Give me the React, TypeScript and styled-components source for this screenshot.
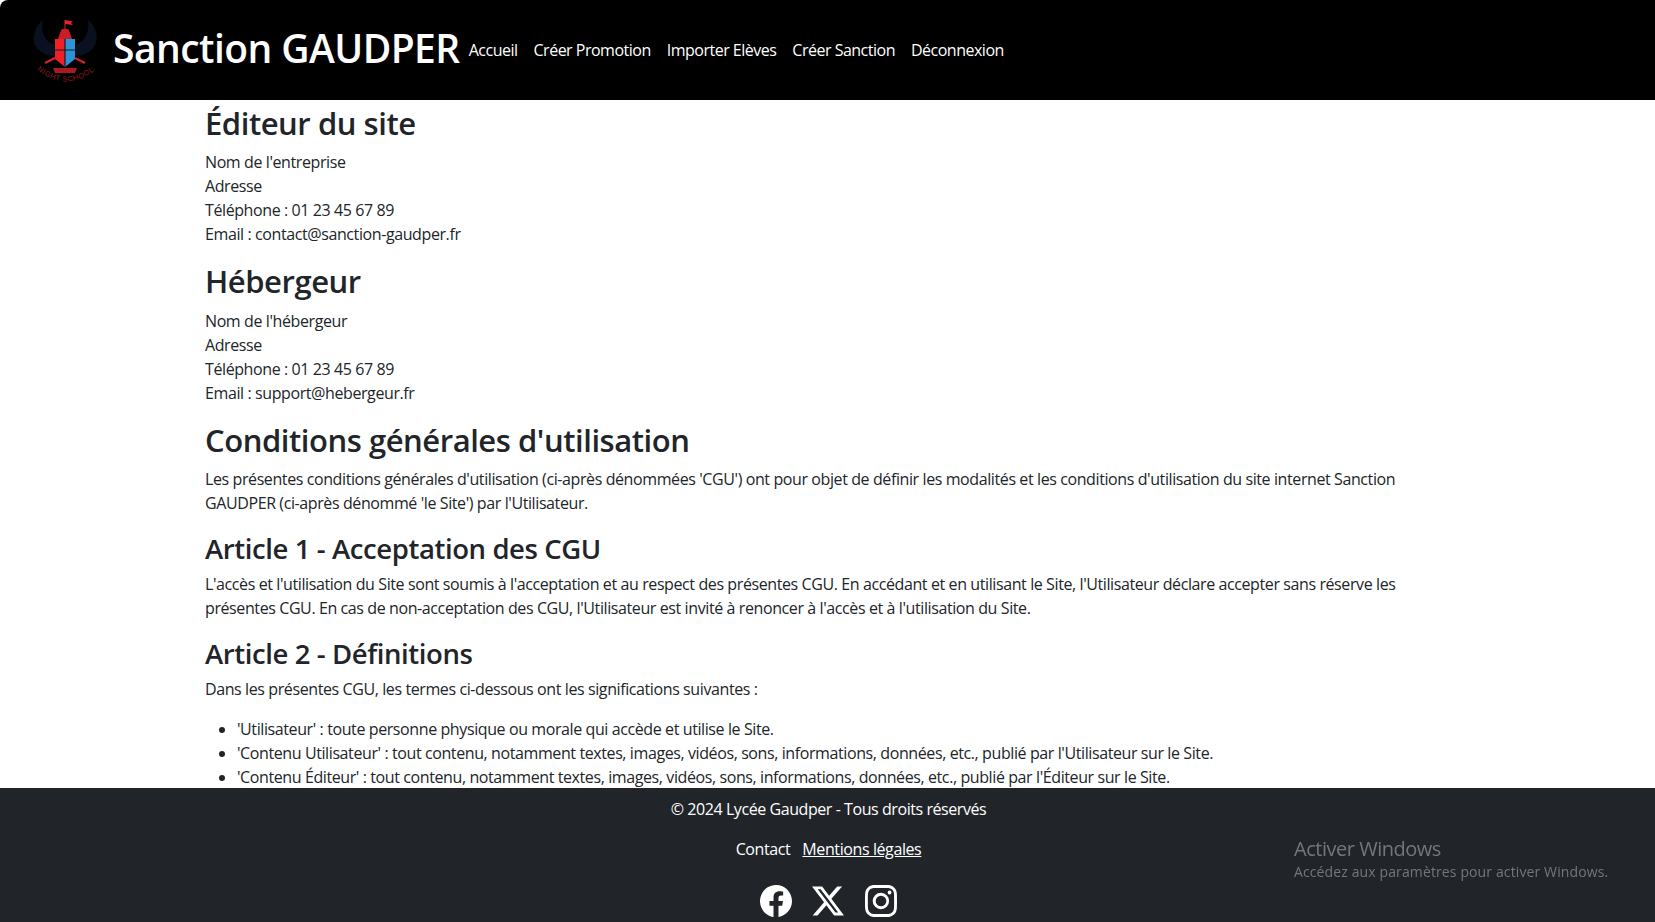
import { createGlobalStyle, styled } from "styled-components";
import { BsFacebook, BsInstagram, BsTwitterX } from "react-icons/bs";

const GlobalStyle = createGlobalStyle`
  * {
    box-sizing: border-box;
  }
  html, body {
    margin: 0;
    height: 100%;
    background: #fff;
  }
  body {
    font-family: "Open Sans", "Noto Sans", "Liberation Sans", sans-serif;
    font-size: 16px;
    line-height: 24px;
    letter-spacing: -0.4px;
    color: #212529;
  }
`;

const Page = styled.div`
  display: flex;
  flex-direction: column;
  height: 922px;
  overflow: hidden;
`;

const Header = styled.header`
  flex: 0 0 100px;
  display: flex;
  align-items: center;
  padding-left: 30px;
  background: #000;
  color: #fff;
  border-top-left-radius: 8px;
`;

const Brand = styled.a`
  display: flex;
  align-items: center;
  gap: 13px;
  margin-right: 9px;
  white-space: nowrap;
`;

const BrandName = styled.span`
  padding-bottom: 4px;
  font-size: 39px;
  font-weight: 600;
  line-height: 48px;
  letter-spacing: -0.55px;
`;

const Nav = styled.nav`
  display: flex;
  gap: 16px;
`;

const NavLink = styled.a`
  color: #fff;
  letter-spacing: -0.5px;
  white-space: nowrap;
`;

const Main = styled.main`
  flex: 1;
  min-height: 0;
  overflow: hidden;
  padding: 4px 205px 0;
`;

const Heading = styled.h2`
  margin: 0 0 8px;
  font-size: 31px;
  font-weight: 600;
  line-height: 38.4px;
  letter-spacing: -0.45px;
`;

const SubHeading = styled.h3`
  margin: 17px 0 6.5px;
  font-size: 27.5px;
  font-weight: 600;
  line-height: 33.6px;
  letter-spacing: -0.4px;
`;

const Paragraph = styled.p`
  margin: 0 0 16px;
`;

const List = styled.ul`
  margin: 0;
  padding-left: 32px;
`;

const Footer = styled.footer`
  flex: 0 0 134px;
  display: flex;
  flex-direction: column;
  align-items: center;
  padding-top: 9px;
  background: #212529;
  color: #fff;
`;

const Copyright = styled.div`
  padding-left: 2px;
  letter-spacing: -0.43px;
`;

const FooterLinks = styled.div`
  display: flex;
  gap: 12px;
  margin-top: 16px;
  padding-left: 2px;
`;

const FooterLink = styled.a<{ $underline?: boolean }>`
  color: #fff;
  text-decoration: ${(p) => (p.$underline ? "underline" : "none")};
`;

const Socials = styled.div`
  display: flex;
  gap: 20.5px;
  margin-top: 24px;
  padding-left: 1px;
  font-size: 32px;
  line-height: 0;
`;

const Watermark = styled.div`
  position: fixed;
  left: 1294px;
  top: 836px;
  color: #74777a;
  font-size: 14px;
  line-height: 20px;
  letter-spacing: 0.12px;
`;

const WatermarkTitle = styled.div`
  font-size: 20px;
  line-height: 26px;
  letter-spacing: -0.48px;
`;

function Logo() {
  return (
    <svg width="70" height="70" viewBox="0 0 70 70" aria-hidden="true">
      <path d="M26 30 C16 28 10 18 13 5 C5 11 2 22 5 30 C9 38 18 41 26 41Z" fill="#0b1020" />
      <path d="M44 30 C54 28 60 18 58 5 C66 11 69 22 65 30 C61 38 52 41 44 41Z" fill="#0b1020" />
      <path d="M35 17V5" stroke="#d8232a" strokeWidth="1" />
      <path d="M35 5L43 6.5L41 8L43 10L35 9Z" fill="#e0252b" />
      <path d="M30 18L32 14H38L40 18L42 24H28Z" fill="#c81f26" />
      <path d="M25 24H35V52L25 44Z" fill="#ee2028" />
      <path d="M35 24H45V44L35 52Z" fill="#2a94d6" />
      <path d="M25 35H45M35 24V52" stroke="#1a1a22" strokeWidth="1.2" />
      <path d="M15 48L25 43M55 48L45 43" stroke="#d8232a" strokeWidth="2" />
      <path d="M23 53H47L45 58H25Z" fill="#a81b21" />
      <path id="logo-arc" d="M5 53 Q35 79 65 55" fill="none" />
      <text fontSize="7.5" fontFamily="Liberation Sans, sans-serif" fill="#8c1c22" letterSpacing="0.5">
        <textPath href="#logo-arc" startOffset="4%">NIGHT SCHOOL</textPath>
      </text>
    </svg>
  );
}

export default function App() {
  return (
    <>
      <GlobalStyle />
      <Page>
        <Header>
          <Brand>
            <Logo />
            <BrandName>Sanction GAUDPER</BrandName>
          </Brand>
          <Nav>
            <NavLink>Accueil</NavLink>
            <NavLink>Créer Promotion</NavLink>
            <NavLink>Importer Elèves</NavLink>
            <NavLink>Créer Sanction</NavLink>
            <NavLink>Déconnexion</NavLink>
          </Nav>
        </Header>
        <Main>
          <Heading>Éditeur du site</Heading>
          <Paragraph>
            Nom de l'entreprise
            <br />
            Adresse
            <br />
            Téléphone : 01 23 45 67 89
            <br />
            Email : contact@sanction-gaudper.fr
          </Paragraph>
          <Heading>Hébergeur</Heading>
          <Paragraph>
            Nom de l'hébergeur
            <br />
            Adresse
            <br />
            Téléphone : 01 23 45 67 89
            <br />
            Email : support@hebergeur.fr
          </Paragraph>
          <Heading>Conditions générales d'utilisation</Heading>
          <Paragraph>
            Les présentes conditions générales d'utilisation (ci-après dénommées 'CGU') ont pour objet de définir les
            modalités et les conditions d'utilisation du site internet Sanction GAUDPER (ci-après dénommé 'le Site') par
            l'Utilisateur.
          </Paragraph>
          <SubHeading>Article 1 - Acceptation des CGU</SubHeading>
          <Paragraph>
            L'accès et l'utilisation du Site sont soumis à l'acceptation et au respect des présentes CGU. En accédant et
            en utilisant le Site, l'Utilisateur déclare accepter sans réserve les présentes CGU. En cas de non-acceptation
            des CGU, l'Utilisateur est invité à renoncer à l'accès et à l'utilisation du Site.
          </Paragraph>
          <SubHeading>Article 2 - Définitions</SubHeading>
          <Paragraph>Dans les présentes CGU, les termes ci-dessous ont les significations suivantes :</Paragraph>
          <List>
            <li>'Utilisateur' : toute personne physique ou morale qui accède et utilise le Site.</li>
            <li>
              'Contenu Utilisateur' : tout contenu, notamment textes, images, vidéos, sons, informations, données, etc.,
              publié par l'Utilisateur sur le Site.
            </li>
            <li>
              'Contenu Éditeur' : tout contenu, notamment textes, images, vidéos, sons, informations, données, etc., publié
              par l'Éditeur sur le Site.
            </li>
          </List>
        </Main>
        <Footer>
          <Copyright>© 2024 Lycée Gaudper - Tous droits réservés</Copyright>
          <FooterLinks>
            <FooterLink>Contact</FooterLink>
            <FooterLink $underline>Mentions légales</FooterLink>
          </FooterLinks>
          <Socials>
            <BsFacebook />
            <BsTwitterX />
            <BsInstagram />
          </Socials>
        </Footer>
        <Watermark>
          <WatermarkTitle>Activer Windows</WatermarkTitle>
          Accédez aux paramètres pour activer Windows.
        </Watermark>
      </Page>
    </>
  );
}
